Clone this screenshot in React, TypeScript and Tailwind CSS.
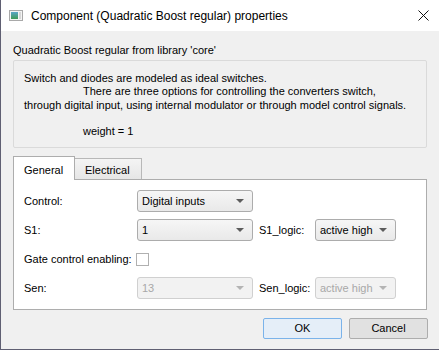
import React from "react";

const F = { fontFamily: '"Liberation Sans", Arial, sans-serif' };

function Arrow({ disabled }: { disabled?: boolean }) {
  return (
    <svg width="8" height="4" viewBox="0 0 8 4" className="shrink-0">
      <path d="M0 0 L8 0 L4 4 Z" fill={disabled ? "#b4b4b4" : "#5c5c5c"} />
    </svg>
  );
}

function Combo({ text, w, disabled }: { text: string; w: string; disabled?: boolean }) {
  return (
    <div
      className={`${w} h-[22px] flex items-center justify-between pl-[4px] pr-[8px] rounded-[3px] border ${
        disabled
          ? "border-[#d0d0d0] bg-[#f2f2f2] text-[#a8a8a8]"
          : "border-[#acacac] bg-gradient-to-b from-[#f6f6f6] to-[#e9e9e9] text-black"
      }`}
    >
      <span>{text}</span>
      <Arrow disabled={disabled} />
    </div>
  );
}

export default function App() {
  return (
    <div
      className="w-[439px] h-[350px] bg-[#f0f0f0] border-l border-b border-[#5f5f72] flex flex-col text-[11px] text-black overflow-hidden"
      style={F}
    >
      {/* Title bar */}
      <div className="h-[31px] bg-white flex items-center shrink-0 pl-[8px] pr-[10px]">
        <svg width="14" height="11" viewBox="0 0 14 11" className="shrink-0">
          <rect x="0.5" y="0.5" width="13" height="10" fill="#f4f4f4" stroke="#a9a9a9" />
          <defs>
            <linearGradient id="g" x1="0" y1="0" x2="0" y2="1">
              <stop offset="0" stopColor="#5aa6c8" />
              <stop offset="1" stopColor="#3f9a55" />
            </linearGradient>
          </defs>
          <rect x="2" y="2" width="7" height="7" fill="url(#g)" />
          <rect x="10" y="2" width="2" height="7" fill="#d8d8d8" />
        </svg>
        <span className="ml-[8px] text-[12px] flex-1">
          Component (Quadratic Boost regular) properties
        </span>
        <svg width="11" height="11" viewBox="0 0 11 11">
          <path d="M0.5 0.5 L10.5 10.5 M10.5 0.5 L0.5 10.5" stroke="#111" strokeWidth="1" />
        </svg>
      </div>

      {/* Body */}
      <div className="flex flex-col px-[11px]">
        <div className="h-[13px] mt-[13px] leading-[13px] pl-[1px]">Quadratic Boost regular from library 'core'</div>
        <div className="mt-[3px] h-[88px] mx-[1px] border border-[#dadada] rounded-[2px] bg-[#f0f0f0] pt-[11px] pl-[10px] leading-[13.3px]">
          <div>Switch and diodes are modeled as ideal switches.</div>
          <div className="pl-[59px]">There are three options for controlling the converters switch,</div>
          <div>through digital input, using internal modulator or through model control signals.</div>
          <div>&nbsp;</div>
          <div className="pl-[59px]">weight = 1</div>
        </div>

        {/* Tabs */}
        <div className="mt-[8px] mx-[1px] flex items-end h-[23px]">
          <div className="w-[62px] h-[24px] -mb-[1px] bg-white border border-b-0 border-[#adadad] pl-[10px] pt-[5px] relative z-10">
            General
          </div>
          <div className="w-[67px] h-[21px] bg-gradient-to-b from-[#f4f4f4] to-[#e6e6e6] border border-l-0 border-b-0 border-[#b8b8b8] pl-[10px] pt-[3px]">
            Electrical
          </div>
        </div>
        <div className="mx-[1px] h-[131px] bg-white border border-[#adadad] pt-[10px] pl-[10px]">
          <div className="grid grid-cols-[113px_116px_62px_81px] grid-rows-[22px_22px_22px_22px] gap-y-[7px] items-center">
            <div>Control:</div>
            <Combo text="Digital inputs" w="w-[116px]" />
            <div />
            <div />

            <div>S1:</div>
            <Combo text="1" w="w-[116px]" />
            <div className="pl-[6px]">S1_logic:</div>
            <Combo text="active high" w="w-[81px]" />

            <div>Gate control enabling:</div>
            <div className="w-[13px] h-[13px] border border-[#b0b0b0] bg-white -ml-[1px]" />
            <div />
            <div />

            <div>Sen:</div>
            <Combo text="13" w="w-[116px]" disabled />
            <div className="pl-[6px]">Sen_logic:</div>
            <Combo text="active high" w="w-[81px]" disabled />
          </div>
        </div>

        {/* Buttons */}
        <div className="mt-[8px] flex justify-end gap-[7px] pr-[0px]">
          <div className="w-[79px] h-[21px] flex items-center justify-center border border-[#7bb3ea] bg-[#e5eef8] rounded-[2px]">
            OK
          </div>
          <div className="w-[79px] h-[21px] flex items-center justify-center border border-[#adadad] bg-[#e1e1e1] rounded-[2px]">
            Cancel
          </div>
        </div>
      </div>
    </div>
  );
}
